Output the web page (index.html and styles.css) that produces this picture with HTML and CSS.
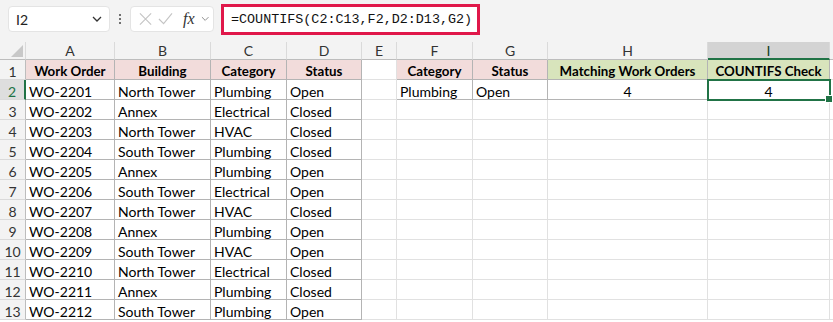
FILE: index.html
```html
<!DOCTYPE html>
<html>
<head>
<meta charset="utf-8">
<link rel="stylesheet" href="styles.css">
</head>
<body>
<div class="topbar">
  <div class="namebox">
    <span class="name">I2</span>
    <svg class="chev" width="10" height="6" viewBox="0 0 10 6"><path d="M1 1 L5 5 L9 1" fill="none" stroke="#333" stroke-width="1.3"/></svg>
  </div>
  <div class="dots"><span></span><span></span><span></span></div>
  <div class="fxbox">
    <svg width="14" height="14" viewBox="0 0 14 14"><path d="M1 1 L13 13 M13 1 L1 13" stroke="#c4c4c4" stroke-width="1.2"/></svg>
    <svg width="16" height="14" viewBox="0 0 16 14"><path d="M1 7 L6 12 L15 1" fill="none" stroke="#c4c4c4" stroke-width="1.2"/></svg>
    <span class="fx">fx</span>
    <svg width="9" height="6" viewBox="0 0 9 6"><path d="M1 1 L4.5 4.5 L8 1" fill="none" stroke="#888" stroke-width="1"/></svg>
  </div>
  <div class="formula">=COUNTIFS(C2:C13,F2,D2:D13,G2)</div>
</div>
<div class="strip"></div>
<div class="sheet">
  <div class="corner"><svg width="12" height="12" viewBox="0 0 12 12"><path d="M12 0 L12 12 L0 12 Z" fill="#c8c8c8"/></svg></div>
  <div class="ch">A</div><div class="ch">B</div><div class="ch">C</div><div class="ch">D</div><div class="ch">E</div><div class="ch">F</div><div class="ch">G</div><div class="ch">H</div><div class="ch sel">I</div><div class="ch last"></div>

  <div class="rh">1</div>
  <div class="c t hp b">Work Order</div><div class="c t hp b">Building</div><div class="c t hp b">Category</div><div class="c t hp b">Status</div>
  <div class="c"></div>
  <div class="c t hp b">Category</div><div class="c t hp b">Status</div><div class="c t hg b">Matching Work Orders</div><div class="c t hg b">COUNTIFS Check</div><div class="c last"></div>

  <div class="rh rsel">2</div>
  <div class="c t">WO-2201</div><div class="c t">North Tower</div><div class="c t">Plumbing</div><div class="c t">Open</div>
  <div class="c"></div>
  <div class="c t">Plumbing</div><div class="c t">Open</div><div class="c t n">4</div><div class="c t n active">4<span class="handle"></span></div><div class="c last"></div>

  <div class="rh">3</div>
  <div class="c t">WO-2202</div><div class="c t">Annex</div><div class="c t">Electrical</div><div class="c t">Closed</div><div class="c"></div><div class="c"></div><div class="c"></div><div class="c"></div><div class="c"></div><div class="c last"></div>
  <div class="rh">4</div>
  <div class="c t">WO-2203</div><div class="c t">North Tower</div><div class="c t">HVAC</div><div class="c t">Closed</div><div class="c"></div><div class="c"></div><div class="c"></div><div class="c"></div><div class="c"></div><div class="c last"></div>
  <div class="rh">5</div>
  <div class="c t">WO-2204</div><div class="c t">South Tower</div><div class="c t">Plumbing</div><div class="c t">Closed</div><div class="c"></div><div class="c"></div><div class="c"></div><div class="c"></div><div class="c"></div><div class="c last"></div>
  <div class="rh">6</div>
  <div class="c t">WO-2205</div><div class="c t">Annex</div><div class="c t">Plumbing</div><div class="c t">Open</div><div class="c"></div><div class="c"></div><div class="c"></div><div class="c"></div><div class="c"></div><div class="c last"></div>
  <div class="rh">7</div>
  <div class="c t">WO-2206</div><div class="c t">South Tower</div><div class="c t">Electrical</div><div class="c t">Open</div><div class="c"></div><div class="c"></div><div class="c"></div><div class="c"></div><div class="c"></div><div class="c last"></div>
  <div class="rh">8</div>
  <div class="c t">WO-2207</div><div class="c t">North Tower</div><div class="c t">HVAC</div><div class="c t">Closed</div><div class="c"></div><div class="c"></div><div class="c"></div><div class="c"></div><div class="c"></div><div class="c last"></div>
  <div class="rh">9</div>
  <div class="c t">WO-2208</div><div class="c t">Annex</div><div class="c t">Plumbing</div><div class="c t">Open</div><div class="c"></div><div class="c"></div><div class="c"></div><div class="c"></div><div class="c"></div><div class="c last"></div>
  <div class="rh">10</div>
  <div class="c t">WO-2209</div><div class="c t">South Tower</div><div class="c t">HVAC</div><div class="c t">Open</div><div class="c"></div><div class="c"></div><div class="c"></div><div class="c"></div><div class="c"></div><div class="c last"></div>
  <div class="rh">11</div>
  <div class="c t">WO-2210</div><div class="c t">North Tower</div><div class="c t">Electrical</div><div class="c t">Closed</div><div class="c"></div><div class="c"></div><div class="c"></div><div class="c"></div><div class="c"></div><div class="c last"></div>
  <div class="rh">12</div>
  <div class="c t">WO-2211</div><div class="c t">Annex</div><div class="c t">Plumbing</div><div class="c t">Closed</div><div class="c"></div><div class="c"></div><div class="c"></div><div class="c"></div><div class="c"></div><div class="c last"></div>
  <div class="rh">13</div>
  <div class="c t">WO-2212</div><div class="c t">South Tower</div><div class="c t">Plumbing</div><div class="c t">Open</div><div class="c"></div><div class="c"></div><div class="c"></div><div class="c"></div><div class="c"></div><div class="c last"></div>
</div>
</body>
</html>
```

FILE: styles.css
```css
html, body {
  margin: 0;
  padding: 0;
  background: #ffffff;
  overflow: hidden;
}
body {
  width: 833px;
  height: 322px;
  font-family: "Lato", "Liberation Sans", sans-serif;
}
.topbar {
  height: 38px;
  background: #f3f3f3;
  display: flex;
  align-items: center;
  box-sizing: border-box;
  padding-left: 8px;
}
.namebox {
  width: 102px;
  height: 26px;
  box-sizing: border-box;
  background: #fff;
  border: 1px solid #e4e4e4;
  border-radius: 4px;
  display: flex;
  align-items: center;
  justify-content: space-between;
  padding: 0 7px 0 7px;
  font-size: 14px;
  color: #222;
}
.dots {
  width: 20px;
  display: flex;
  flex-direction: column;
  align-items: center;
  gap: 2px;
}
.dots span {
  width: 2px;
  height: 2px;
  background: #444;
  border-radius: 1px;
}
.fxbox {
  width: 84px;
  height: 26px;
  box-sizing: border-box;
  background: #fff;
  border: 1px solid #e4e4e4;
  border-radius: 4px;
  display: flex;
  align-items: center;
  gap: 6px;
  padding: 0 4px 0 8px;
}
.fx {
  font-family: "Liberation Serif", serif;
  font-style: italic;
  font-size: 16px;
  color: #333;
  margin-left: 4px;
}
.formula {
  margin-left: 7px;
  width: 259px;
  height: 31px;
  box-sizing: border-box;
  border: 3px solid #e0184a;
  background: #fff;
  font-family: "Liberation Mono", monospace;
  font-size: 13.4px;
  color: #111;
  display: flex;
  align-items: center;
  padding-left: 7px;
  align-self: flex-start;
  margin-top: 4px;
}
.strip {
  height: 4px;
  background: #f3f3f3;
}
.sheet {
  display: grid;
  grid-template-columns: 26px 89px 96px 76px 75px 35px 76px 75px 160px 122px 1fr;
  grid-template-rows: 18px repeat(13, 20px);
  font-size: 14px;
  color: #000;
}
.corner {
  background: #f3f3f3;
  border-right: 1px solid #dadada;
  border-bottom: 1px solid #bdbdbd;
  box-sizing: border-box;
  display: flex;
  align-items: flex-end;
  justify-content: flex-end;
  padding: 0 2px 2px 0;
}
.ch {
  background: #f3f3f3;
  border-right: 1px solid #dadada;
  border-bottom: 1px solid #bdbdbd;
  box-sizing: border-box;
  text-align: center;
  font-size: 14px;
  line-height: 18px;
  color: #333;
}
.ch.sel {
  background: #d3d3d3;
  border-bottom: 2px solid #217346;
  color: #0f3d22;
}
.ch.last { border-right: 0; }
.rh {
  background: #f3f3f3;
  border-right: 1px solid #bdbdbd;
  border-bottom: 1px solid #dadada;
  box-sizing: border-box;
  text-align: center;
  font-size: 14px;
  line-height: 19px;
  padding-top: 2px;
  color: #333;
}
.rh.rsel {
  background: #dedede;
  color: #217346;
  border-right: 2px solid #217346;
}
.c {
  border-right: 1px solid #e1e1e1;
  border-bottom: 1px solid #e1e1e1;
  box-sizing: border-box;
  line-height: 19px;
  padding-top: 2px;
  padding-left: 3px;
  white-space: nowrap;
  overflow: visible;
  position: relative;
}
.c.last { border-right: 0; }
.c.t {
  border-right-color: #b4b4b4;
  border-bottom-color: #b4b4b4;
}
.hp { background: #f2dcdb; }
.hg { background: #d8e4bc; }
.b {
  font-weight: bold;
  font-size: 13.3px;
  text-align: center;
  padding-left: 0;
}
.n {
  text-align: center;
  padding-left: 0;
}
.active {
  outline: 2px solid #217346;
  outline-offset: -1px;
  z-index: 1;
}
.handle {
  position: absolute;
  right: -4px;
  bottom: -4px;
  width: 6px;
  height: 6px;
  background: #217346;
  border: 1px solid #fff;
}
```
